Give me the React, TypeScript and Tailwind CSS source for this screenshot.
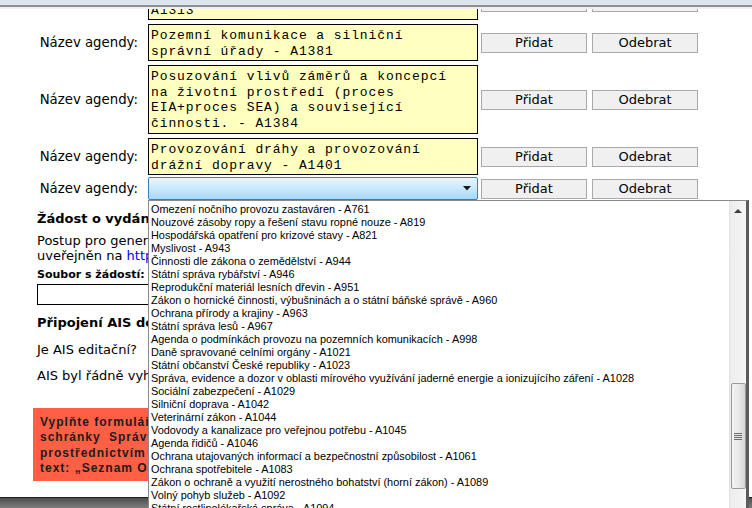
import React from "react";

const agendaRows = [
  { lines: ["Zákon o zeměměřictví a katastru", "A1313"], h: "h-[37px]" },
  { lines: ["Pozemní komunikace a silniční", "správní úřady - A1381"], h: "h-[37px]" },
  {
    lines: [
      "Posuzování vlivů záměrů a koncepcí",
      "na životní prostředí (proces",
      "EIA+proces SEA) a související",
      "činnosti. - A1384",
    ],
    h: "h-[69px]",
  },
  { lines: ["Provozování dráhy a provozování", "drážní dopravy - A1401"], h: "h-[37px]" },
];

const options = [
  "Omezení nočního provozu zastaváren - A761",
  "Nouzové zásoby ropy a řešení stavu ropné nouze - A819",
  "Hospodářská opatření pro krizové stavy - A821",
  "Myslivost - A943",
  "Činnosti dle zákona o zemědělství - A944",
  "Státní správa rybářství - A946",
  "Reprodukční materiál lesních dřevin - A951",
  "Zákon o hornické činnosti, výbušninách a o státní báňské správě - A960",
  "Ochrana přírody a krajiny - A963",
  "Státní správa lesů - A967",
  "Agenda o podmínkách provozu na pozemních komunikacích - A998",
  "Daně spravované celními orgány - A1021",
  "Státní občanství České republiky - A1023",
  "Správa, evidence a dozor v oblasti mírového využívání jaderné energie a ionizujícího záření - A1028",
  "Sociální zabezpečení - A1029",
  "Silniční doprava - A1042",
  "Veterinární zákon - A1044",
  "Vodovody a kanalizace pro veřejnou potřebu - A1045",
  "Agenda řidičů - A1046",
  "Ochrana utajovaných informací a bezpečnostní způsobilost - A1061",
  "Ochrana spotřebitele - A1083",
  "Zákon o ochraně a využití nerostného bohatství (horní zákon) - A1089",
  "Volný pohyb služeb - A1092",
  "Státní rostlinolékařská správa - A1094",
];

const Buttons = () => (
  <div className="ml-[3px] flex gap-[5px]">
    <button className="w-[106px] h-[20px] border border-[#a9a9a9] bg-[#f0f0f0] text-[13px] leading-[18px] text-black">
      Přidat
    </button>
    <button className="w-[106px] h-[20px] border border-[#a9a9a9] bg-[#f0f0f0] text-[13px] leading-[18px] text-black">
      Odebrat
    </button>
  </div>
);

const Label = () => (
  <div className="w-[138px] shrink-0 text-right text-[13.3px] whitespace-nowrap">Název agendy:</div>
);

const App = () => {
  return (
    <div
      className="relative w-[752px] h-[508px] overflow-hidden bg-white flex flex-col text-black"
      style={{ fontFamily: '"DejaVu Sans", Verdana, sans-serif' }}
    >
      {/* okno prohlížeče - horní lišta */}
      <div className="h-[5px] shrink-0 bg-[#dde5ee]" />
      <div className="h-[2px] shrink-0 bg-[#8f8f8f]" />
      <div className="h-[2px] shrink-0 bg-[#f0f0f0]" />

      {/* obsah stránky (odscrollovaný) */}
      <div className="flex-1 overflow-hidden">
        <div className="mt-[-26px] flex flex-col gap-[4px]">
          {agendaRows.map((row, i) => (
            <div key={i} className="flex items-center">
              <Label />
              <div
                className={`ml-[10px] w-[330px] ${row.h} shrink-0 border border-black bg-[#ffffc0] px-[2px] pt-[3px] pb-[1px] text-[13px] leading-[15.5px] tracking-[0.9px] whitespace-pre overflow-hidden`}
                style={{ fontFamily: '"Liberation Mono", "Courier New", monospace' }}
              >
                {row.lines.map((l, j) => (
                  <div key={j}>{l}</div>
                ))}
              </div>
              <Buttons />
            </div>
          ))}

          {/* řádek s rozbaleným výběrem */}
          <div className="flex items-center mt-[-2px]">
            <Label />
            <div className="ml-[10px] w-[330px] h-[23px] shrink-0 border border-[#3c7fb1] rounded-[2px] bg-gradient-to-b from-[#eaf6fd] via-[#c9e8fb] to-[#a7d8f5] flex items-center justify-end pr-[6px]">
              <svg width="8" height="5" viewBox="0 0 8 5">
                <path d="M0 0 L8 0 L4 4.5 Z" fill="#1a1a1a" />
              </svg>
            </div>
            <Buttons />
          </div>
        </div>

        {/* další sekce formuláře */}
        <div className="pl-[37px] pr-4">
          <h2 className="mt-[11px] text-[13px] leading-[16px] font-bold whitespace-nowrap">
            Žádost o vydání certifikátu pro přístup k základním registrům
          </h2>
          <p className="mt-[6px] text-[13px] leading-[15px] whitespace-nowrap">
            Postup pro generování žádosti o certifikát je
            <br />
            uveřejněn na <span className="text-[#0000ee]">https://www.szrcr.cz</span>
          </p>
          <div className="mt-[5px] text-[11px] leading-[14px] font-bold whitespace-nowrap">Soubor s žádostí:</div>
          <div className="mt-[2px] w-[300px] h-[21px] border border-black bg-white" />
          <h2 className="mt-[10px] text-[13px] leading-[16px] font-bold whitespace-nowrap">
            Připojení AIS do základních registrů
          </h2>
          <p className="mt-[11px] text-[13px] leading-[15px] whitespace-nowrap">Je AIS editační?</p>
          <p className="mt-[11px] text-[13px] leading-[15px] whitespace-nowrap">
            AIS byl řádně vyhlášen podle zákona
          </p>
        </div>

        <div
          className="ml-[33px] mt-[25px] w-[500px] h-[73px] bg-[#fe5f45] pl-[7px] pt-[7px] text-[12px] leading-[15.3px] font-bold tracking-[1px] text-[#1c1c1c] whitespace-nowrap"
          style={{ fontFamily: '"Liberation Sans", Arial, sans-serif' }}
        >
          <div>Vyplňte formulář a odešlete jej do datové</div>
          <div className="[word-spacing:4px]">schránky Správy základních registrů</div>
          <div>prostřednictvím své datové schránky. Do předmětu uveďte</div>
          <div>text: „Seznam OVM s AIS"</div>
        </div>
      </div>

      {/* spodní lišta okna */}
      <div className="h-[11px] shrink-0 border-t border-[#1e1e1e] bg-gradient-to-b from-[#4f4f4f] to-[#7d7d7d]" />

      {/* rozbalený seznam agend */}
      <div className="absolute left-[148px] top-[200px] w-[601px] h-[308px] flex bg-white border-l border-t border-[#8a8a8a] border-r-[3px] border-r-[#5c5c5c]">
        <div
          className="flex-1 overflow-hidden pl-[2px] pt-[2px] text-[10.9px] leading-[13px] text-black"
          style={{ fontFamily: '"Liberation Sans", Arial, sans-serif' }}
        >
          {options.map((o) => (
            <div key={o} className="h-[13px] whitespace-nowrap">
              {o}
            </div>
          ))}
        </div>
        <div className="w-[17px] shrink-0 bg-gradient-to-r from-[#ececec] to-[#f6f6f6] border-l border-[#e2e2e2] flex flex-col items-center">
          <svg className="mt-[8px]" width="8" height="4" viewBox="0 0 8 4">
            <path d="M0 4 L4 0 L8 4 Z" fill="#3c3c3c" />
          </svg>
          <div className="mt-[170px] w-[15px] h-[106px] rounded-[2px] border border-[#9a9a9a] bg-gradient-to-r from-[#f4f4f4] via-[#e8e8e8] to-[#d6d6d6] flex items-center justify-center">
            <svg width="8" height="8" viewBox="0 0 8 8">
              <path d="M0 1.5 H8 M0 3.5 H8 M0 5.5 H8 M0 7.5 H8" stroke="#6a6a6a" strokeWidth="1" />
            </svg>
          </div>
        </div>
      </div>
    </div>
  );
};

export default App;
